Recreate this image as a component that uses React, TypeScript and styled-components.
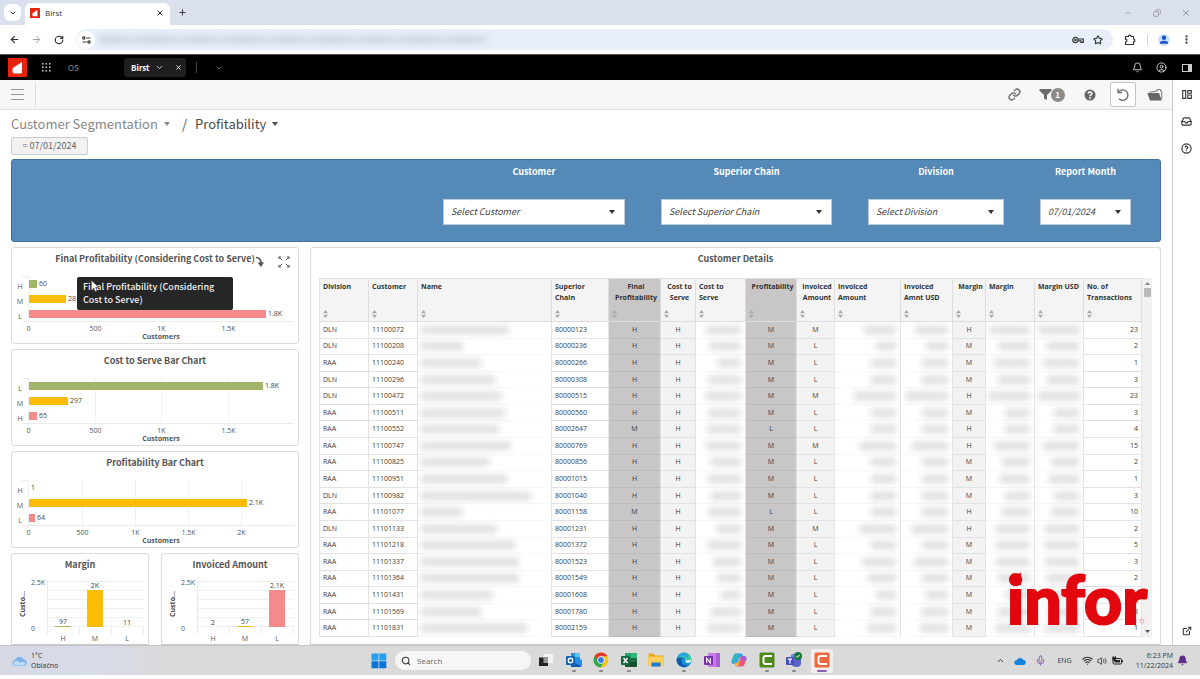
import React from "react";
import styled, { createGlobalStyle, css } from "styled-components";
import {
  ArrowLeft,
  ArrowRight,
  Bell,
  ChevronDown,
  ChevronUp,
  CircleHelp,
  CircleUser,
  Copy,
  ExternalLink,
  Inbox,
  Link as LinkIcon,
  Mic,
  Minus,
  MoreVertical,
  Plus,
  RotateCcw,
  RotateCw,
  Search,
  Star,
  Volume2,
  Wifi,
  X,
} from "lucide-react";

const source = `"Noto Sans CJK SC", "Open Sans", sans-serif`;
const open = `"Open Sans", "Noto Sans", sans-serif`;

const Global = createGlobalStyle`
  * { box-sizing: border-box; }
  body { margin: 0; background: #fff; font-family: ${open}; color: #444; }
  button { border: 0; padding: 0; margin: 0; background: none; color: inherit; font: inherit; cursor: pointer; }
  svg { display: block; flex: none; }
`;

/* ---------- shared parts ---------- */

const Page = styled.div`
  display: flex;
  flex-direction: column;
  min-height: 100vh;
`;

const Slot = styled.button<{ $w: number; $color?: string }>`
  width: ${(p) => p.$w}px;
  height: 100%;
  flex: none;
  display: flex;
  align-items: center;
  justify-content: center;
  color: ${(p) => p.$color ?? "inherit"};
`;

const Spacer = styled.div`
  flex: 1;
`;

/* ---------- browser chrome ---------- */

const TabStrip = styled.div`
  display: flex;
  align-items: center;
  height: 25px;
  padding: 0 0 0 4px;
  background: #dbe0ee;
  color: #333;
`;

const TabSearch = styled.button`
  width: 17px;
  height: 17px;
  border-radius: 6px;
  background: #fff;
  display: flex;
  align-items: center;
  justify-content: center;
`;

const BrowserTab = styled.div`
  align-self: flex-end;
  display: flex;
  align-items: center;
  gap: 5px;
  width: 145px;
  height: 22px;
  margin-left: 4px;
  padding: 0 6px 2px 5px;
  border-radius: 6px 6px 0 0;
  background: #fff;
  font: 8px/12px ${open};
`;

const AddressRow = styled.div`
  display: flex;
  align-items: center;
  height: 29px;
  padding: 0 7px 0 3px;
  color: #333;
`;

const AddressPill = styled.div`
  flex: 1;
  display: flex;
  align-items: center;
  height: 21px;
  margin-left: 6px;
  padding: 0 5px 0 1px;
  border-radius: 11px;
  background: #e9eefb;
`;

const SiteInfo = styled.button`
  width: 18px;
  height: 18px;
  border-radius: 9px;
  background: #fff;
  display: flex;
  align-items: center;
  justify-content: center;
`;

const HiddenAddress = styled.div`
  width: 388px;
  height: 7px;
  margin-left: 4px;
  background: repeating-linear-gradient(90deg, #cdd3e2 0 26px, #d4d9e7 26px 44px);
  filter: blur(3px);
`;

const Divider = styled.div<{ $h: number; $color: string }>`
  width: 1px;
  height: ${(p) => p.$h}px;
  background: ${(p) => p.$color};
`;

/* ---------- portal bar ---------- */

const PortalBar = styled.header`
  display: flex;
  align-items: center;
  height: 26px;
  padding: 0 0 0 8px;
  border-top: 1px solid #555;
  background: #000;
  color: #d8d8d8;
`;

const PortalName = styled.span`
  width: 58px;
  padding-left: 2px;
  font: 8px/12px ${source};
  color: #8b8b8b;
`;

const PortalTab = styled.div`
  display: flex;
  align-items: center;
  width: 62px;
  height: 19px;
  margin-right: 10px;
  padding-left: 7px;
  border-radius: 3px;
  background: #1f1f21;
  color: #fff;
  font: bold 8px/12px ${source};
`;

const TabLabel = styled.span`
  flex: 1;
`;

/* ---------- application ---------- */

const AppBody = styled.div`
  display: flex;
`;

const Main = styled.main`
  flex: 1;
  min-width: 0;
  display: flex;
  flex-direction: column;
`;

const Rail = styled.aside`
  display: flex;
  flex-direction: column;
  align-items: center;
  width: 28px;
  padding: 1px 0;
  border-left: 1px solid #ccc;
  background: #fff;
  color: #333;
`;

const RailButton = styled.button`
  width: 27px;
  height: 27px;
  display: flex;
  align-items: center;
  justify-content: center;
`;

const AppToolbar = styled.div`
  display: flex;
  align-items: center;
  height: 30px;
  flex: none;
  padding-right: 1px;
  border-bottom: 1px solid #dedede;
  background: #f7f7f7;
  color: #6a6a6a;
`;

const ResetButton = styled.button`
  width: 26px;
  height: 25px;
  border: 1px solid #c4c4c4;
  border-radius: 2px;
  background: #fff;
  display: flex;
  align-items: center;
  justify-content: center;
`;

const Count = styled.span`
  width: 14px;
  height: 14px;
  margin-left: -1px;
  border-radius: 7px;
  background: #8a8a8a;
  color: #fff;
  font: bold 8px/14px ${source};
  text-align: center;
`;

const Content = styled.div`
  display: flex;
  flex-direction: column;
  padding: 2px 11px 0;
`;

const Crumbs = styled.nav`
  display: flex;
  align-items: center;
  height: 23px;
  font: 13px/20px ${source};
`;

const Crumb = styled.a<{ $current?: boolean }>`
  display: flex;
  align-items: center;
  gap: 6px;
  color: ${(p) => (p.$current ? "#4a4a4a" : "#888")};
  text-decoration: none;
`;

const Slash = styled.span`
  margin: 0 8px 0 12px;
  color: #555;
`;

const Caret = styled.span`
  width: 0;
  height: 0;
  border: 3px solid transparent;
  border-top: 4px solid currentColor;
  border-bottom: 0;
`;

const FilterTag = styled.div`
  align-self: flex-start;
  width: 77px;
  height: 18px;
  margin-top: 2px;
  border: 1px solid #ccc;
  border-radius: 2px;
  background: #f2f2f2;
  color: #666;
  font: 9px/16px ${source};
  text-align: center;
`;

const FilterPanel = styled.section`
  display: flex;
  justify-content: flex-end;
  gap: 36px;
  height: 83px;
  flex: none;
  margin-top: 4px;
  padding: 5px 29px 0;
  border: 1px solid #41719f;
  border-radius: 3px;
  background: #5589b8;
`;

const FilterField = styled.label<{ $w: number }>`
  width: ${(p) => p.$w}px;
  color: #fff;
  font: bold 9px/14px ${source};
  text-align: center;
`;

const SelectBox = styled.span`
  display: block;
  position: relative;
  margin-top: 20px;
  color: #333;
`;

const SelectCaret = styled(Caret)`
  position: absolute;
  right: 10px;
  top: 11px;
  pointer-events: none;
`;

const Select = styled.select`
  display: block;
  appearance: none;
  width: 100%;
  height: 26px;
  padding: 0 20px 0 7px;
  border: 1px solid #b9cadb;
  border-radius: 0;
  background: #fff;
  color: #444;
  font: italic 9px/24px ${source};
`;

const Dashboard = styled.div`
  display: flex;
  gap: 11px;
  margin-top: 5px;
`;

const Charts = styled.div`
  display: flex;
  flex-direction: column;
  gap: 5px;
  width: 288px;
  flex: none;
`;

const Pair = styled.div`
  display: flex;
  gap: 12px;
`;

const Card = styled.section<{ $grow?: boolean; $open?: boolean }>`
  position: relative;
  border: 1px solid #dcdcdc;
  border-radius: 3px;
  background: #fff;
  ${(p) => p.$grow && css`flex: 1; min-width: 0;`}
  ${(p) => p.$open && css`border-bottom-color: #ccc; border-radius: 3px 3px 0 0;`}
`;

const CardTitle = styled.h2`
  height: 22px;
  margin: 0;
  color: #555;
  font: bold 9px/22px ${source};
  text-align: center;
`;

const CardTools = styled.div`
  position: absolute;
  top: 8px;
  right: 8px;
  display: flex;
  gap: 14px;
  color: #555;
`;

const Tooltip = styled.div`
  position: absolute;
  left: 65px;
  top: 29px;
  width: 156px;
  height: 33px;
  padding: 3px 6px;
  border-radius: 2px;
  background: #262626;
  color: #f2f2f2;
  font: 500 9px/13px ${source};
`;

const Pointer = styled.svg`
  position: absolute;
  left: 14px;
  top: 3px;
`;

const ChartSvg = styled.svg`
  font-family: ${open};
  font-size: 7px;
  fill: #555;
`;

/* ---------- table ---------- */

const TableArea = styled.div`
  display: flex;
  padding: 8px 8px 7px;
`;

const Table = styled.table`
  flex: 1;
  width: 100%;
  height: 359px;
  table-layout: fixed;
  border-collapse: separate;
  border-spacing: 0;
  border-left: 1px solid #e2e2e2;
  font: 7px/10px ${open};
  color: #3c3c3c;
`;

const HeadRow = styled.tr`
  height: 44px;
`;

type Align = "left" | "center" | "right";

const Th = styled.th<{ $align?: Align; $dark?: boolean }>`
  height: 44px;
  padding: 2px 0 2px 3px;
  border: solid #dedede;
  border-width: 1px 1px 1px 0;
  background: ${(p) => (p.$dark ? "#c8c6c7" : "#f4f4f4")};
  color: #333;
  font-weight: bold;
  line-height: 11px;
  vertical-align: top;
  text-align: ${(p) => (p.$align === "center" ? "center" : "left")};
`;

const ThInner = styled.div`
  display: flex;
  flex-direction: column;
  justify-content: space-between;
  height: 37px;
  white-space: nowrap;
`;

const Td = styled.td<{ $align?: Align; $tone?: "dark" | "soft" | "veil" }>`
  padding: 0 3px;
  border: solid ${(p) => (p.$tone === "dark" ? "#bcbabb" : p.$tone === "veil" ? "#f7f7f7" : "#e2e2e2")};
  border-right-color: #e4e4e4;
  border-width: 0 1px 1px 0;
  background: ${(p) => (p.$tone === "dark" ? "#c8c6c7" : p.$tone === "soft" ? "#f3f3f3" : "#fff")};
  text-align: ${(p) => p.$align ?? "left"};
  white-space: nowrap;
`;

const Masked = styled.div<{ $right?: boolean }>`
  height: 8px;
  margin: ${(p) => (p.$right ? "0 1px 0 auto" : "0")};
  background: #dedede;
  filter: blur(3px);
`;

const Scrollbar = styled.div`
  display: flex;
  flex-direction: column;
  align-items: center;
  gap: 3px;
  width: 10px;
  padding: 4px 0;
  background: #f1f1f1;
`;

const ScrollThumb = styled.div`
  width: 7px;
  height: 9px;
  background: #bbb;
`;

const Brand = styled.svg`
  position: absolute;
  right: 2px;
  bottom: 8px;
  overflow: visible;
  font-family: Lato, ${open};
`;

/* ---------- taskbar ---------- */

const Taskbar = styled.footer`
  display: grid;
  grid-template-columns: 1fr auto 1fr;
  align-items: center;
  height: 30px;
  padding-left: 4px;
  border-top: 1px solid #c4c4c4;
  background: linear-gradient(90deg, #d6d9e4 0, #d7dbea 90px, #dadada 170px, #dadada 100%);
  color: #333;
  font: 7px/10px ${open};
`;

const Weather = styled.div`
  display: flex;
  align-items: center;
  gap: 3px;
  padding-left: 7px;
`;

const Center = styled.div`
  display: flex;
  align-items: center;
  gap: 8px;
`;

const SearchBox = styled.label`
  display: flex;
  align-items: center;
  gap: 6px;
  width: 136px;
  height: 19px;
  padding-left: 6px;
  border-radius: 10px;
  background: #f6f6f6;
`;

const SearchInput = styled.input`
  width: 90px;
  padding: 0;
  border: 0;
  outline: 0;
  background: none;
  font: 8px/12px ${open};
  &::placeholder { color: #666; opacity: 1; }
`;

const Apps = styled.div`
  display: flex;
  justify-content: space-between;
  width: 298px;
  margin-left: -4px;
`;

const AppButton = styled.button<{ $active?: boolean; $running?: boolean }>`
  display: flex;
  flex-direction: column;
  align-items: center;
  justify-content: center;
  gap: 2px;
  width: 22px;
  height: 24px;
  padding-top: 2px;
  border-radius: 2px;
  background: ${(p) => (p.$active ? "#f1eef0" : "none")};
  &::after {
    content: "";
    width: ${(p) => (p.$active ? 10 : 4)}px;
    height: 2px;
    border-radius: 1px;
    background: ${(p) => (p.$active ? "#8a5fb5" : p.$running ? "#888" : "transparent")};
  }
`;

const Tray = styled.div`
  display: flex;
  align-items: center;
  justify-content: flex-end;
  height: 100%;
  padding-right: 12px;
`;

const Clock = styled.div`
  width: 47px;
  margin-right: 3px;
  text-align: right;
  white-space: nowrap;
`;

/* ---------- drawings ---------- */

const BirstMark = ({ size }: { size: number }) => (
  <svg width={size} height={size} viewBox="0 0 19 19">
    <rect width="19" height="19" rx="1" fill="#e8220c" />
    <path d="M5.500 9.500 14 4v10.500a1 1 0 0 1-1 1H6.500a2 2 0 0 1-2-2v-2q0-1.300 1-2z" fill="#fff" />
  </svg>
);

const AppGrid = () => (
  <svg width="9" height="9" viewBox="0 0 9 9" fill="#bbb">
    {[0, 1, 2].map((r) => [0, 1, 2].map((c) => <rect key={`${r}${c}`} x={c * 3.5} y={r * 3.5} width="1.600" height="1.600" />))}
  </svg>
);

const TuneIcon = () => (
  <svg width="9" height="8" viewBox="0 0 9 8" fill="none" stroke="#333" strokeWidth="1.200">
    <circle cx="1.800" cy="2" r="1.200" />
    <path d="M4.500 2H8.500M.5 6h4" />
    <circle cx="7" cy="6" r="1.200" />
  </svg>
);

const KeyIcon = () => (
  <svg width="12" height="8" viewBox="0 0 12 8" fill="none" stroke="#333" strokeWidth="1.200">
    <circle cx="3.500" cy="4" r="2.700" />
    <circle cx="3.500" cy="4" r="0.600" />
    <path d="M6 3h5.300v3.300H9V4.800H6.200" />
  </svg>
);

const PuzzleIcon = () => (
  <svg width="12" height="12" viewBox="0 0 12 12" fill="none" stroke="#333" strokeWidth="1.200" strokeLinejoin="round">
    <path d="M1.500 2.500h3a1.300 1.300 0 0 1 2.600 0H9.500V5a1.400 1.400 0 0 1 0 2.800v2.700h-8V8a1.400 1.400 0 0 0 0-2.800z" />
  </svg>
);

const ProfileIcon = () => (
  <svg width="12" height="12" viewBox="0 0 12 12">
    <circle cx="6" cy="6" r="6" fill="#cfdffa" />
    <g fill="#1a56c4">
      <circle cx="6" cy="3.800" r="2.200" />
      <path d="M2 9.800V8.600Q2 6.800 6 6.800t4 1.800v1.200z" />
    </g>
  </svg>
);

const MenuIcon = () => (
  <svg width="13" height="11" viewBox="0 0 13 11" stroke="#999">
    <path d="M0 .5h13M0 5.500h13M0 10.500h13" />
  </svg>
);

const PanelIcon = () => (
  <svg width="10" height="8" viewBox="0 0 10 8">
    <rect x=".5" y=".5" width="9" height="7" fill="none" stroke="#ccc" />
    <path d="M6 1h3v6H6z" fill="#ccc" />
  </svg>
);

const FunnelIcon = () => (
  <svg width="13" height="11" viewBox="0 0 13 11" fill="#6a6a6a">
    <path d="M.5 0h12v1.800L8 6v5L5 9.500V6L.5 1.800z" />
  </svg>
);

const HelpSolid = () => (
  <svg width="12" height="12" viewBox="0 0 12 12">
    <circle cx="6" cy="6" r="5.500" fill="#666" />
    <path d="M4.100 4.600Q4.200 2.900 6 2.900t1.900 1.500Q7.900 5.500 6.700 6q-.7.300-.7 1.200" fill="none" stroke="#fff" strokeWidth="1.500" />
    <circle cx="6" cy="9" r=".9" fill="#fff" />
  </svg>
);

const ResetIcon = () => (
  <svg width="14" height="14" viewBox="0 0 14 14" fill="none" stroke="#666" strokeWidth="1.300">
    <path d="M3 3.500A5.200 5.200 0 1 1 3 10.700" />
    <path d="M2 .8v3.700h3.900" />
  </svg>
);

const FolderIcon = () => (
  <svg width="16" height="12" viewBox="0 0 16 12">
    <path d="M2.500 3.200 10 2V.6h3.500V2h1.200v8" fill="none" stroke="#777" />
    <path d="M.3 4h11.700l2.700 7.400H3z" fill="#666" />
  </svg>
);

const BoardIcon = () => (
  <svg width="10" height="9" viewBox="0 0 10 9" fill="none" stroke="#333" strokeWidth="1.100">
    <path d="M.7.6h3v7.800h-3zM5.800.6h3.500v2.600H5.800zM5.800 5h3.500v3.400H5.800z" />
  </svg>
);

const ExpandIcon = () => (
  <svg width="12" height="12" viewBox="0 0 12 12" fill="#555" stroke="#555">
    <path d="M1.500 1.500l2.700 2.700M10.500 1.500 7.800 4.200M1.500 10.500l2.700-2.700M10.500 10.500 7.800 7.800" fill="none" />
    <path d="M.5.5h3L.5 3.500zM11.500.5v3L8.500.5zM.5 11.500v-3l3 3zM11.500 11.500h-3l3-3z" stroke="none" />
  </svg>
);

const DrillIcon = () => (
  <svg width="8" height="12" viewBox="0 0 8 12">
    <path d="M0 1.500q5 0 5 6" fill="none" stroke="#555" strokeWidth="1.700" />
    <path d="M1.500 6.500H8L5 11z" fill="#555" />
  </svg>
);

const SortIcon = () => (
  <svg width="5" height="8" viewBox="0 0 5 8" fill="#aaa">
    <path d="M2.500 0 5 3.200H0zM2.500 8 0 4.800h5z" />
  </svg>
);

const CloudWeather = () => (
  <svg width="17" height="12" viewBox="0 0 17 12">
    <path d="M4 11a3.400 3.400 0 0 1 0-6.600A5 5 0 0 1 13 4.500 3.300 3.300 0 0 1 13 11z" fill="#7fb0ec" />
    <path d="M4 10.500a2.500 2.500 0 0 1 0-4.500q3-1 5 2 2-2 5-.5 1 2-1 3z" fill="#bcdcfb" />
  </svg>
);

const WindowsLogo = () => (
  <svg width="16" height="16" viewBox="0 0 16 16">
    <path d="M.5.500h7v7h-7zM8.300.500h7v7h-7z" fill="#26a0ee" />
    <path d="M.5 8.300h7v7h-7zM8.300 8.300h7v7h-7z" fill="#0a74d4" />
  </svg>
);

const AppIcon = ({ name }: { name: string }) => (
  <svg width="16" height="16" viewBox="0 0 16 16">
    {name === "Task view" && (
      <>
        <path d="M5.500 2h9.500v9H5.500z" fill="#f3f3f3" />
        <path d="M1 5.500h9v8.500H1z" fill="#222" />
        <path d="M5.500 5.500H10V11H5.500z" fill="#999" />
      </>
    )}
    {name === "Outlook" && (
      <>
        <path d="M5 1h9v6l2 1v5.500l-2 1.500H5z" fill="#2a8fe0" />
        <path d="M9 1h5v4H9z" fill="#5cc2f7" />
        <path d="m5 9 11 5.500L14 15H5z" fill="#0f5cb0" />
        <rect x="0" y="4" width="9" height="9" rx="1" fill="#0b64bd" />
        <circle cx="4.500" cy="8.500" r="2.200" fill="none" stroke="#fff" strokeWidth="1.400" />
      </>
    )}
    {name === "Chrome" && (
      <>
        <circle cx="8" cy="8" r="7.500" fill="#f9c513" />
        <path d="M8 8 1.500 4.250A7.500 7.500 0 0 0 7.500 15.500L11 10z" fill="#2da94f" />
        <path d="M1.500 4.250A7.500 7.500 0 0 1 14.500 4.250H8L5 9z" fill="#e33b2e" />
        <circle cx="8" cy="8" r="3.700" fill="#fff" />
        <circle cx="8" cy="8" r="2.900" fill="#3b7de9" />
      </>
    )}
    {name === "Excel" && (
      <>
        <rect x="4" y="1" width="12" height="14" rx="1" fill="#1d6f43" />
        <path d="M4 1h6v5H4z" fill="#24a366" />
        <path d="M10 1h6v5h-6z" fill="#30b878" />
        <path d="M4 10h12v4.500H4z" fill="#134e2e" />
        <rect x="0" y="4" width="9" height="9" rx="1" fill="#0f6b3a" />
        <path d="m2.500 6 4 5m0-5-4 5" stroke="#fff" strokeWidth="1.400" />
      </>
    )}
    {name === "File Explorer" && (
      <>
        <path d="M.5 1.500h5l1.500 2h8.500v10H.500z" fill="#e9a520" />
        <path d="M.5 4.500h15v9H.500z" fill="#fbcf57" />
        <path d="M3.500 10.500h9v4h-9z" fill="#1b78c9" />
      </>
    )}
    {name === "Edge" && (
      <>
        <circle cx="8" cy="8" r="7.500" fill="#1c8fd6" />
        <path d="M1 5.500A7.500 7.500 0 0 1 15.500 8q0 3-4 3-2 0-1.500-2.500Q9 5 5.500 5 3 5 1 5.500z" fill="#39c8a0" />
        <path d="M1 5.500A7.500 7.500 0 0 1 10 1q3 2 2 5-3-3-11-.5z" fill="#2aa7dc" />
        <path d="M.6 7Q3 4.500 6.500 6 4 9 7 12.500q3 2 6 .5A7.500 7.500 0 0 1 .6 7z" fill="#0e5aa8" />
        <path d="M9.500 8q3 .5 6-.5-.5 3.500-4 3.500-2.500-.5-2-3z" fill="#dff3f7" />
      </>
    )}
    {name === "OneNote" && (
      <>
        <rect x="4" y="1" width="12" height="14" rx="1" fill="#c979e8" />
        <path d="M12 1h4v14h-4z" fill="#ad5bd6" />
        <rect x="0" y="4" width="9" height="9" rx="1" fill="#7a2fa3" />
        <path d="M2.700 11V6.200L6.300 11V6" fill="none" stroke="#fff" strokeWidth="1.200" />
      </>
    )}
    {name === "Copilot" && (
      <>
        <path d="M5 1.500h5q1.500 0 2 2L12.500 5H9L6 12H3Q0 12 .7 8.500L2.500 3.500Q3 1.500 5 1.500z" fill="#2f9fe3" />
        <path d="M.9 8 2 12h4l2-6-1-4.500H5q-2 0-2.500 2z" fill="#3ec3a9" opacity=".5" />
        <path d="M11 14.500H6q-1.500 0-2-2L3.500 11H7l3-7h3q3 0 2.300 3.500L13.500 12.500q-.5 2-2.500 2z" fill="#e7567f" />
        <path d="M3.500 11H7l2-4-1 6-2 1.500q-1.500 0-2-2z" fill="#f7b33c" />
        <path d="M10 4h3q3 0 2.300 3.500L14.500 9 10 7z" fill="#a063dc" />
      </>
    )}
    {(name === "Camtasia" || name === "Recorder") && (
      <>
        <rect x=".5" y=".5" width="15" height="15" rx="1.500" fill={name === "Camtasia" ? "#4c8b1b" : "#f0683c"} />
        <path d="M12 5V4H6.500Q4.500 4 4.500 6v4q0 2 2 2H12v-1" fill="none" stroke="#fff" strokeWidth="2" />
      </>
    )}
    {name === "Teams" && (
      <>
        <circle cx="7.500" cy="4.500" r="2.800" fill="#7b83eb" />
        <path d="M5 7h10v4q0 4-4.500 4T5 11z" fill="#5b62c9" />
        <rect x="0" y="5" width="8" height="8" rx="1" fill="#4650b5" />
        <path d="M2 7.200h4M4 7v4.500" stroke="#fff" strokeWidth="1.200" />
        <circle cx="12" cy="4" r="4" fill="#13793a" />
        <path d="m10.200 4 1.300 1.300 2.300-2.500" fill="none" stroke="#fff" />
      </>
    )}
  </svg>
);

const OneDriveIcon = () => (
  <svg width="12" height="8" viewBox="0 0 12 8">
    <path d="M2.500 8a2.300 2.300 0 0 1 .3-4.700A3.600 3.600 0 0 1 9.300 3 2.500 2.500 0 0 1 9.500 8z" fill="#1583dc" />
  </svg>
);

const BatteryIcon = () => (
  <svg width="11" height="9" viewBox="0 0 11 9">
    <rect x="1" y="2.500" width="8.500" height="5.500" rx="1.200" fill="#ddd" stroke="#222" />
    <path d="M2.500 4h5.500v2.500H2.500zM10 4.200h1v2h-1z" fill="#222" />
    <path d="M.8 0h.8v1.300h1.300V0h.8v1.300h.5v2L3 4.200v1H1.600v-1L.2 3.300v-2h.6z" fill="#222" />
  </svg>
);

/* ---------- charts ---------- */

const GREEN = "#a0b568";
const YELLOW = "#fcbc05";
const RED = "#f48b8b";

type Bar = { cat: string; label: string; size: number; color: string };
type Tick = { at: number; label: string };

const HorizontalChart = ({ name, bars, ticks, grid = true }: { name: string; bars: Bar[]; ticks: Tick[]; grid?: boolean }) => (
  <ChartSvg width="286" height="73" viewBox="0 0 286 73" role="img" aria-label={name}>
    {ticks.map((t) => (
      <g key={t.label}>
        {(grid || t.at < 20) && <path d={`M${t.at + 0.5} 6v48`} stroke="#f1f1f1" />}
        <text x={t.at + 0.5} y="61" textAnchor="middle">{t.label}</text>
      </g>
    ))}
    <path d="M10 51.500h272M10 6.500h6" stroke="#ebebeb" />
    {bars.map((b, i) => (
      <g key={b.cat}>
        <text x="8" y={19 + i * 15} textAnchor="middle">{b.cat}</text>
        <rect x="17" y={10 + i * 15} width={b.size} height="8" fill={b.color} />
        <text x={19 + b.size} y={16 + i * 15} fill="#444">{b.label}</text>
      </g>
    ))}
    <text x="149" y="69" textAnchor="middle" fontWeight="bold">Customers</text>
  </ChartSvg>
);

const ColumnChart = ({ name, bars }: { name: string; bars: Bar[] }) => (
  <ChartSvg width="136" height="68" viewBox="0 0 136 68" role="img" aria-label={name}>
    {[5, 14, 23, 32, 41, 50].map((y) => (
      <path key={y} d={`M34 ${y + 0.5}h98`} stroke="#f0f0f0" />
    ))}
    <path d="M35.500 5v53M67.500 50v8M99.500 50v8M131.500 50v8" stroke="#ebebeb" />
    <text x="19" y="9">2.5K</text>
    <text x="19" y="55">0</text>
    <text transform="translate(13 28) rotate(-90)" textAnchor="middle" fontWeight="bold" fill="#444">Custo...</text>
    {bars.map((b, i) => (
      <g key={b.cat}>
        <rect x={43 + i * 32} y={51 - b.size} width="16" height={b.size} fill={b.color} />
        <text x={51 + i * 32} y={49 - b.size} textAnchor="middle" fill="#444">{b.label}</text>
        <text x={51 + i * 32} y="65" textAnchor="middle">{b.cat}</text>
      </g>
    ))}
  </ChartSvg>
);

const ticksTo15: Tick[] = [
  { at: 16, label: "0" },
  { at: 83, label: "500" },
  { at: 149, label: "1K" },
  { at: 216, label: "1.5K" },
];
const ticksTo20: Tick[] = [
  { at: 16, label: "0" },
  { at: 70, label: "500" },
  { at: 123, label: "1K" },
  { at: 176, label: "1.5K" },
  { at: 229, label: "2K" },
];

/* ---------- table data ---------- */

type Column = { lines: string[]; w: number; align?: Align; dark?: boolean };
const columns: Column[] = [
  { lines: ["Division"], w: 49 },
  { lines: ["Customer"], w: 49 },
  { lines: ["Name"], w: 134 },
  { lines: ["Superior", "Chain"], w: 57 },
  { lines: ["Final", "Profitability"], w: 52, align: "center", dark: true },
  { lines: ["Cost to", "Serve"], w: 35, align: "center" },
  { lines: ["Cost to", "Serve"], w: 50 },
  { lines: ["Profitability"], w: 51, align: "center", dark: true },
  { lines: ["Invoiced", "Amount"], w: 38, align: "center" },
  { lines: ["Invoiced", "Amount"], w: 66 },
  { lines: ["Invoiced", "Amnt USD"], w: 52 },
  { lines: ["Margin"], w: 33, align: "center" },
  { lines: ["Margin"], w: 49 },
  { lines: ["Margin USD"], w: 49 },
  { lines: ["No. of", "Transactions"], w: 58 },
];

// division, customer, chain, grades (final, cost, profitability, invoiced, margin), transactions, masked widths
type Customer = [string, string, string, string, number, number[]];
const rows: Customer[] = [
  ["DLN", "11100072", "80000123", "HHMMH", 23, [88, 35, 32, 33, 41, 42]],
  ["DLN", "11100208", "80000236", "HHMLM", 2, [42, 32, 20, 22, 32, 32]],
  ["RAA", "11100240", "80000266", "HHMLM", 1, [60, 23, 25, 26, 36, 36]],
  ["DLN", "11100296", "80000308", "HHMLM", 3, [74, 32, 25, 26, 32, 32]],
  ["DLN", "11100472", "80000515", "HHMMH", 23, [80, 35, 42, 42, 41, 42]],
  ["RAA", "11100511", "80000560", "HHMLM", 3, [84, 33, 25, 26, 25, 25]],
  ["RAA", "11100552", "80002647", "MHLLH", 4, [78, 34, 25, 26, 25, 25]],
  ["RAA", "11100747", "80000769", "HHMMH", 15, [90, 35, 36, 36, 36, 36]],
  ["RAA", "11100825", "80000856", "HHMLM", 2, [68, 30, 25, 26, 28, 28]],
  ["RAA", "11100951", "80001015", "HHMLM", 1, [86, 33, 25, 26, 30, 30]],
  ["DLN", "11100982", "80001040", "HHMLM", 3, [110, 30, 25, 26, 25, 25]],
  ["RAA", "11101077", "80001158", "MHLLH", 10, [42, 33, 25, 26, 28, 28]],
  ["DLN", "11101133", "80001231", "HHMMH", 2, [76, 24, 36, 36, 34, 34]],
  ["RAA", "11101218", "80001372", "HHMLM", 5, [94, 33, 25, 26, 34, 34]],
  ["RAA", "11101337", "80001523", "HHMLM", 3, [98, 28, 34, 34, 34, 34]],
  ["RAA", "11101364", "80001549", "HHMLM", 2, [98, 24, 28, 26, 32, 32]],
  ["RAA", "11101431", "80001608", "HHMLM", 1, [72, 20, 20, 22, 25, 25]],
  ["RAA", "11101569", "80001780", "HHMLM", 3, [60, 30, 25, 26, 32, 32]],
  ["RAA", "11101831", "80002159", "HHMLM", 1, [106, 33, 28, 28, 34, 34]],
];

const MaskedCell = ({ w, right }: { w: number; right?: boolean }) => (
  <Td $tone="veil">
    <Masked $right={right} style={{ width: w }} />
  </Td>
);

const CustomerTable = () => (
  <Table aria-label="Customer Details">
    <colgroup>
      {columns.map((c, i) => (
        <col key={i} style={{ width: c.w }} />
      ))}
    </colgroup>
    <thead>
      <HeadRow>
        {columns.map((c, i) => (
          <Th key={i} scope="col" $align={c.align} $dark={c.dark}>
            <ThInner>
              <span>
                {c.lines.map((l, k) => (
                  <React.Fragment key={l}>
                    {k > 0 && <br />}
                    {l}
                  </React.Fragment>
                ))}
              </span>
              <SortIcon />
            </ThInner>
          </Th>
        ))}
      </HeadRow>
    </thead>
    <tbody>
      {rows.map(([division, id, chain, g, count, m]) => (
        <tr key={id}>
          <Td>{division}</Td>
          <Td>{id}</Td>
          <MaskedCell w={m[0]} />
          <Td>{chain}</Td>
          <Td $align="center" $tone="dark">{g[0]}</Td>
          <Td $align="center" $tone="soft">{g[1]}</Td>
          <MaskedCell w={m[1]} right />
          <Td $align="center" $tone="dark">{g[2]}</Td>
          <Td $align="center" $tone="soft">{g[3]}</Td>
          <MaskedCell w={m[2]} right />
          <MaskedCell w={m[3]} right />
          <Td $align="center" $tone="soft">{g[4]}</Td>
          <MaskedCell w={m[4]} right />
          <MaskedCell w={m[5]} right />
          <Td $align="right">{count}</Td>
        </tr>
      ))}
    </tbody>
  </Table>
);

const filters = [
  { label: "Customer", value: "Select Customer", w: 182 },
  { label: "Superior Chain", value: "Select Superior Chain", w: 171 },
  { label: "Division", value: "Select Division", w: 136 },
  { label: "Report Month", value: "07/01/2024", w: 91 },
];

const apps = [
  { name: "Task view" },
  { name: "Outlook", running: true },
  { name: "Chrome", running: true },
  { name: "Excel", running: true },
  { name: "File Explorer" },
  { name: "Edge", running: true },
  { name: "OneNote" },
  { name: "Copilot" },
  { name: "Camtasia", running: true },
  { name: "Teams", running: true },
  { name: "Recorder", active: true },
];

export default function App() {
  return (
    <Page>
      <Global />
      <TabStrip>
        <TabSearch aria-label="Search tabs"><ChevronDown size={8} strokeWidth={3} /></TabSearch>
        <BrowserTab>
          <BirstMark size={10} />
          <TabLabel>Birst</TabLabel>
          <button aria-label="Close tab"><X size={8} strokeWidth={3} /></button>
        </BrowserTab>
        <Slot $w={24} aria-label="New tab"><Plus size={9} strokeWidth={2.5} /></Slot>
        <Spacer />
        <Slot $w={29} $color="#888" aria-label="Minimize"><Minus size={8} /></Slot>
        <Slot $w={29} $color="#888" aria-label="Restore"><Copy size={8} style={{ transform: "scaleX(-1)" }} /></Slot>
        <Slot $w={29} $color="#888" aria-label="Close window"><X size={10} /></Slot>
      </TabStrip>
      <AddressRow>
        <Slot $w={22} aria-label="Back"><ArrowLeft size={11} strokeWidth={2.5} /></Slot>
        <Slot $w={22} $color="#999" aria-label="Forward"><ArrowRight size={11} strokeWidth={2} /></Slot>
        <Slot $w={23} aria-label="Reload"><RotateCw size={10} strokeWidth={2.8} /></Slot>
        <AddressPill>
          <SiteInfo aria-label="Site information"><TuneIcon /></SiteInfo>
          <HiddenAddress />
          <Spacer />
          <Slot $w={20} aria-label="Passwords"><KeyIcon /></Slot>
          <Slot $w={20} aria-label="Bookmark"><Star size={10} strokeWidth={2.5} /></Slot>
        </AddressPill>
        <Slot $w={34} aria-label="Extensions"><PuzzleIcon /></Slot>
        <Divider $h={10} $color="#ccd3e4" />
        <Slot $w={31} aria-label="Profile"><ProfileIcon /></Slot>
        <Slot $w={14} aria-label="Browser menu"><MoreVertical size={11} strokeWidth={3} /></Slot>
      </AddressRow>

      <PortalBar>
        <BirstMark size={19} />
        <Slot $w={39} aria-label="Applications"><AppGrid /></Slot>
        <PortalName>OS</PortalName>
        <PortalTab>
          <TabLabel>Birst</TabLabel>
          <Slot $w={20} aria-label="Birst menu"><ChevronDown size={9} /></Slot>
          <Slot $w={18} aria-label="Close Birst"><X size={7} strokeWidth={3} /></Slot>
        </PortalTab>
        <Divider $h={11} $color="#444" />
        <Slot $w={44} $color="#999" aria-label="More tabs"><ChevronDown size={8} /></Slot>
        <Spacer />
        <Slot $w={24} aria-label="Notifications"><Bell size={11} /></Slot>
        <Slot $w={25} aria-label="Account"><CircleUser size={11} /></Slot>
        <Slot $w={26} aria-label="Side panel"><PanelIcon /></Slot>
      </PortalBar>

      <AppBody>
        <Main>
          <AppToolbar>
            <Slot $w={35} aria-label="Menu"><MenuIcon /></Slot>
            <Divider $h={26} $color="#dedede" />
            <Spacer />
            <Slot $w={32} aria-label="Copy link"><LinkIcon size={13} strokeWidth={2.5} /></Slot>
            <Slot $w={43} aria-label="Filters"><FunnelIcon /><Count>1</Count></Slot>
            <Slot $w={34} aria-label="Help"><HelpSolid /></Slot>
            <Slot $w={32} as="div"><ResetButton aria-label="Reset"><ResetIcon /></ResetButton></Slot>
            <Slot $w={32} aria-label="Open"><FolderIcon /></Slot>
          </AppToolbar>
          <Content>
            <Crumbs aria-label="Breadcrumb">
              <Crumb href="#segmentation">Customer Segmentation <Caret /></Crumb>
              <Slash>/</Slash>
              <Crumb href="#profitability" $current>Profitability <Caret /></Crumb>
            </Crumbs>
            <FilterTag>= 07/01/2024</FilterTag>
            <FilterPanel>
              {filters.map((f) => (
                <FilterField key={f.label} $w={f.w}>
                  {f.label}
                  <SelectBox>
                    <Select defaultValue={f.value}><option>{f.value}</option></Select>
                    <SelectCaret />
                  </SelectBox>
                </FilterField>
              ))}
            </FilterPanel>
            <Dashboard>
              <Charts>
                <Card>
                  <CardTitle>Final Profitability (Considering Cost to Serve)</CardTitle>
                  <CardTools><DrillIcon /><ExpandIcon /></CardTools>
                  <HorizontalChart
                    name="Final Profitability"
                    grid={false}
                    ticks={ticksTo15}
                    bars={[
                      { cat: "H", label: "60", size: 8, color: GREEN },
                      { cat: "M", label: "28", size: 37, color: YELLOW },
                      { cat: "L", label: "1.8K", size: 237, color: RED },
                    ]}
                  />
                  <Tooltip role="tooltip">
                    Final Profitability (Considering<br />Cost to Serve)
                    <Pointer width="8" height="12" viewBox="0 0 8 12">
                      <path d="M.5.5v9.500l2.300-2L4.300 11.500l1.700-.8L4.500 7.300H7.500z" fill="#fff" stroke="#555" strokeWidth=".5" />
                    </Pointer>
                  </Tooltip>
                </Card>
                <Card>
                  <CardTitle>Cost to Serve Bar Chart</CardTitle>
                  <HorizontalChart
                    name="Cost to Serve"
                    ticks={ticksTo15}
                    bars={[
                      { cat: "L", label: "1.8K", size: 234, color: GREEN },
                      { cat: "M", label: "297", size: 39, color: YELLOW },
                      { cat: "H", label: "65", size: 8, color: RED },
                    ]}
                  />
                </Card>
                <Card>
                  <CardTitle>Profitability Bar Chart</CardTitle>
                  <HorizontalChart
                    name="Profitability"
                    ticks={ticksTo20}
                    bars={[
                      { cat: "H", label: "1", size: 0, color: GREEN },
                      { cat: "M", label: "2.1K", size: 218, color: YELLOW },
                      { cat: "L", label: "64", size: 6, color: RED },
                    ]}
                  />
                </Card>
                <Pair>
                  <Card $grow $open>
                    <CardTitle>Margin</CardTitle>
                    <ColumnChart
                      name="Margin"
                      bars={[
                        { cat: "H", label: "97", size: 1, color: GREEN },
                        { cat: "M", label: "2K", size: 37, color: YELLOW },
                        { cat: "L", label: "11", size: 0, color: RED },
                      ]}
                    />
                  </Card>
                  <Card $grow $open>
                    <CardTitle>Invoiced Amount</CardTitle>
                    <ColumnChart
                      name="Invoiced Amount"
                      bars={[
                        { cat: "H", label: "2", size: 0, color: GREEN },
                        { cat: "M", label: "57", size: 1, color: YELLOW },
                        { cat: "L", label: "2.1K", size: 37, color: RED },
                      ]}
                    />
                  </Card>
                </Pair>
              </Charts>
              <Card $grow $open>
                <CardTitle>Customer Details</CardTitle>
                <TableArea>
                  <CustomerTable />
                  <Scrollbar>
                    <svg width="5" height="3" viewBox="0 0 5 3" fill="#888"><path d="M2.500 0 5 3H0z" /></svg>
                    <ScrollThumb />
                    <Spacer />
                    <svg width="5" height="3" viewBox="0 0 5 3" fill="#555"><path d="M2.500 3 0 0h5z" /></svg>
                  </Scrollbar>
                </TableArea>
                <Brand width="148" height="74" viewBox="0 0 148 74" role="img" aria-label="infor">
                  <text x="-3" y="62" fontSize="66" fontWeight="900" fill="#e2060e" stroke="#e2060e" strokeWidth="2">infor</text>
                  <path d="M1 16.500 11 10.500V23H1z" fill="#e2060e" />
                  <circle cx="132" cy="59" r="2" fill="none" stroke="#e88" strokeWidth=".7" />
                </Brand>
              </Card>
            </Dashboard>
          </Content>
        </Main>
        <Rail>
          <RailButton aria-label="Widgets"><BoardIcon /></RailButton>
          <RailButton aria-label="Inbox"><Inbox size={11} strokeWidth={2.5} /></RailButton>
          <RailButton aria-label="Help"><CircleHelp size={11} strokeWidth={2.5} /></RailButton>
          <Spacer />
          <RailButton aria-label="Open in new window"><ExternalLink size={10} strokeWidth={2.5} /></RailButton>
        </Rail>
      </AppBody>

      <Taskbar>
        <Weather>
          <CloudWeather />
          <span>1°C<br />Oblačno</span>
        </Weather>
        <Center>
          <button aria-label="Start"><WindowsLogo /></button>
          <SearchBox>
            <Search size={10} strokeWidth={2.5} />
            <SearchInput placeholder="Search" aria-label="Search" />
          </SearchBox>
          <Apps>
            {apps.map((a) => (
              <AppButton key={a.name} aria-label={a.name} $active={a.active} $running={a.running}>
                <AppIcon name={a.name} />
              </AppButton>
            ))}
          </Apps>
        </Center>
        <Tray>
          <Slot $w={20} aria-label="Hidden icons"><ChevronUp size={9} strokeWidth={2.5} /></Slot>
          <Slot $w={20} aria-label="OneDrive"><OneDriveIcon /></Slot>
          <Slot $w={20} $color="#7d5a9a" aria-label="Microphone"><Mic size={11} strokeWidth={2} /></Slot>
          <Slot $w={29} aria-label="Language">ENG</Slot>
          <Slot $w={16} aria-label="Network"><Wifi size={11} strokeWidth={2.5} /></Slot>
          <Slot $w={14} aria-label="Sound"><Volume2 size={10} strokeWidth={2} /></Slot>
          <Slot $w={17} aria-label="Battery"><BatteryIcon /></Slot>
          <Clock>6:23 PM<br />11/22/2024</Clock>
          <Slot $w={12} $color="#5c2d86" aria-label="Notifications"><Bell size={11} fill="#5c2d86" /></Slot>
        </Tray>
      </Taskbar>
    </Page>
  );
}
